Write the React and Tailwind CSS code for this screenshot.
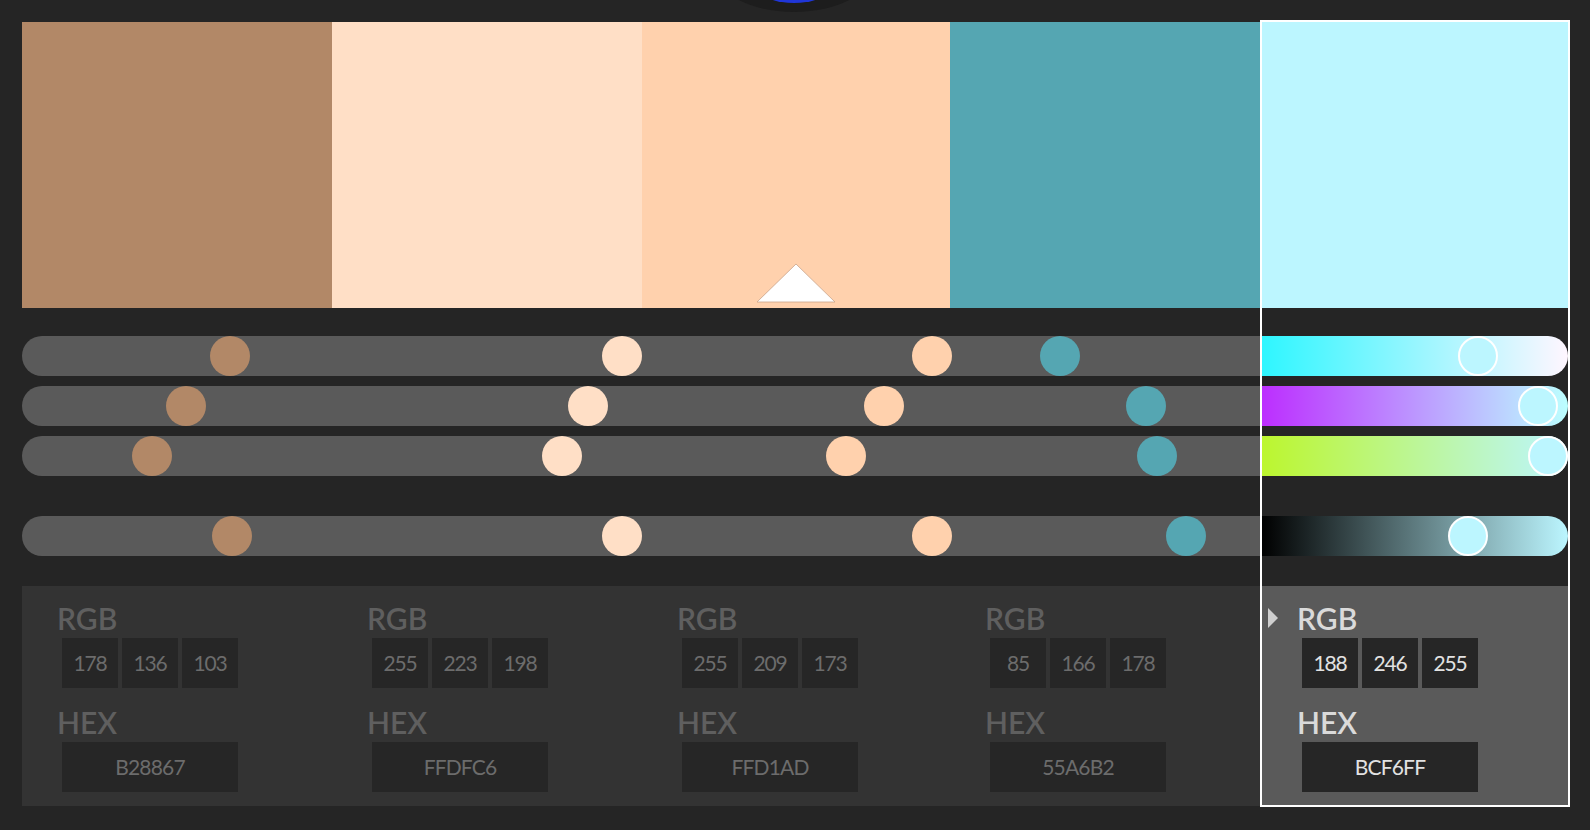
import React from "react";

const COLORS = [
  { hex: "B28867", rgb: [178, 136, 103], bg: "bg-[#b28867]", w: "w-[310px]" },
  { hex: "FFDFC6", rgb: [255, 223, 198], bg: "bg-[#ffdfc6]", w: "w-[310px]" },
  { hex: "FFD1AD", rgb: [255, 209, 173], bg: "bg-[#ffd1ad]", w: "w-[308px]" },
  { hex: "55A6B2", rgb: [85, 166, 178], bg: "bg-[#55a6b2]", w: "w-[310px]" },
];

// thumb offsets on the shared gray track, one list per slider row
const THUMBS = [
  [188, 580, 890, 1018],
  [144, 546, 842, 1104],
  [110, 520, 804, 1115],
  [190, 580, 890, 1144],
];

const SELECTED_ROWS = [
  { grad: "bg-[linear-gradient(to_right,#2ef6ff,#fff6ff)]", left: 196 },
  { grad: "bg-[linear-gradient(to_right,#bc2eff,#bcffff)]", left: 256 },
  { grad: "bg-[linear-gradient(to_right,#bcf62e,#bcf6ff)]", left: 266 },
  { grad: "bg-[linear-gradient(to_right,#000000,#bcf6ff)]", left: 186 },
];

const font = { fontFamily: "Lato, 'Open Sans', sans-serif" };

const Arrow = ({ hidden }) => (
  <svg
    width="10"
    height="20"
    viewBox="0 0 10 20"
    className={hidden ? "invisible" : ""}
  >
    <polygon points="0,0 10,10 0,20" fill="#cfcfcf" />
  </svg>
);

const ValuePanel = ({ rgb, hex, active }) => {
  const label = active ? "text-[#dadada]" : "text-[#5f5f5f]";
  const value = active ? "text-[#e2e2e2]" : "text-[#6c6c6c]";
  return (
    <div className="pt-[17px]">
      <div className="flex items-center pl-[6px] h-[30px]">
        <Arrow hidden={!active} />
        <span className={`ml-[19px] text-[30px] leading-[30px] font-semibold ${label}`}>
          RGB
        </span>
      </div>
      <div className="flex gap-[4px] ml-[40px] mt-[5px]">
        {rgb.map((v, i) => (
          <div
            key={i}
            className={`w-[56px] h-[50px] bg-[#262626] flex items-center justify-center text-[21px] tracking-[-0.06em] ${value}`}
          >
            {v}
          </div>
        ))}
      </div>
      <div className={`pl-[35px] mt-[19px] text-[30px] leading-[30px] font-semibold ${label}`}>
        HEX
      </div>
      <div
        className={`ml-[40px] mt-[5px] w-[176px] h-[50px] bg-[#262626] flex items-center justify-center text-[21px] tracking-[-0.04em] ${value}`}
      >
        {hex}
      </div>
    </div>
  );
};

export default function App() {
  return (
    <div
      className="relative w-[1590px] h-[830px] bg-[#252525] overflow-hidden"
      style={font}
    >
      {/* bottom of the color wheel peeking in at the top */}
      <svg
        className="absolute top-0 left-[719px]"
        width="150"
        height="14"
        viewBox="0 0 150 14"
      >
        <ellipse cx="75" cy="-34" rx="82" ry="46" fill="#1d1d1d" />
        <ellipse cx="75" cy="-9" rx="32" ry="12" fill="#2036d8" />
      </svg>

      <div className="flex pl-[22px] pt-[20px]">
        {/* left four colors */}
        <div className="w-[1238px] pt-[2px] flex flex-col">
          <div className="flex h-[286px]">
            {COLORS.map((c, i) => (
              <div key={c.hex} className={`relative h-full ${c.w} ${c.bg}`}>
                {i === 2 && (
                  <svg
                    className="absolute bottom-[5px] left-[114px]"
                    width="80"
                    height="40"
                    viewBox="0 0 80 40"
                  >
                    <polygon
                      points="40,1 79,39 1,39"
                      fill="#ffffff"
                      stroke="#c9a58c"
                      strokeWidth="0.8"
                    />
                  </svg>
                )}
              </div>
            ))}
          </div>

          <div className="mt-[28px] flex flex-col gap-[10px]">
            {THUMBS.map((row, r) => (
              <div
                key={r}
                className={`relative h-[40px] bg-[#5a5a5a] rounded-l-full ${r === 3 ? "mt-[30px]" : ""}`}
              >
                {row.map((left, i) => (
                  <div
                    key={i}
                    className={`absolute top-0 w-[40px] h-[40px] rounded-full ${COLORS[i].bg}`}
                    style={{ left }}
                  />
                ))}
              </div>
            ))}
          </div>

          <div className="mt-[30px] h-[220px] bg-[#333333] flex">
            {COLORS.map((c) => (
              <div key={c.hex} className={`${c.w} shrink-0`}>
                <ValuePanel rgb={c.rgb} hex={c.hex} />
              </div>
            ))}
          </div>
        </div>

        {/* selected color */}
        <div className="w-[310px] border-2 border-white flex flex-col">
          <div className="h-[286px] bg-[#bcf6ff]" />
          <div className="mt-[28px] flex flex-col gap-[10px]">
            {SELECTED_ROWS.map((s, r) => (
              <div
                key={r}
                className={`relative h-[40px] rounded-r-full ${s.grad} ${r === 3 ? "mt-[30px]" : ""}`}
              >
                <div
                  className="absolute top-0 w-[40px] h-[40px] rounded-full bg-[#bcf6ff] border-2 border-white"
                  style={{ left: s.left }}
                />
              </div>
            ))}
          </div>
          <div className="mt-[30px] h-[219px] bg-[#5a5a5a]">
            <ValuePanel rgb={[188, 246, 255]} hex="BCF6FF" active />
          </div>
        </div>
      </div>
    </div>
  );
}
